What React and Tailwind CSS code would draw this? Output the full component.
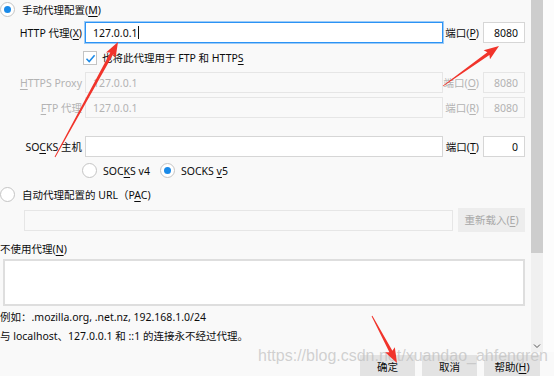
import React from "react";

const font = { fontFamily: '"Noto Sans", "Noto Sans CJK SC", sans-serif' };

const Radio = ({ on }) => (
  <span className="w-[15px] h-[15px] shrink-0 rounded-full border border-[#c4c4c4] bg-white flex items-center justify-center">
    {on ? <span className="w-[7px] h-[7px] rounded-full bg-[#1a8ae8]" /> : null}
  </span>
);

const U = ({ children }) => <span className="underline underline-offset-2">{children}</span>;

const Row = ({ label, value, portLabel, port, disabled, focused, top }) => (
  <div className={`flex items-center h-[21px] ${top}`}>
    <div className={`w-[82px] text-right whitespace-nowrap ${disabled ? "text-[#b3b3b3]" : ""}`}>{label}</div>
    <div
      className={`ml-[3px] w-[358px] h-full flex items-center pl-[7px] border ${
        focused
          ? "bg-white border-[#2b93f5] shadow-[0_0_0_1px_rgba(43,147,245,0.45)]"
          : disabled
          ? "bg-[#f9f9f9] border-[#e6e6e6] text-[#b3b3b3]"
          : "bg-white border-[#d6d6d6]"
      }`}
    >
      {value}
      {focused ? <span className="ml-px w-px h-[13px] bg-[#111]" /> : null}
    </div>
    <div className={`w-[36px] text-right whitespace-nowrap ${disabled ? "text-[#b3b3b3]" : ""}`}>{portLabel}</div>
    <div
      className={`ml-[4px] w-[42px] h-full flex items-center justify-end pr-[6px] border ${
        disabled ? "bg-[#f9f9f9] border-[#e6e6e6] text-[#b3b3b3]" : "bg-white border-[#d6d6d6]"
      }`}
    >
      {port}
    </div>
  </div>
);

function arrowPoints(x1, y1, x2, y2, L = 13, W = 5.5) {
  const dx = x2 - x1;
  const dy = y2 - y1;
  const len = Math.hypot(dx, dy);
  const ux = dx / len;
  const uy = dy / len;
  const nx = -uy;
  const ny = ux;
  const bx = x2 - ux * L;
  const by = y2 - uy * L;
  const bx2 = x2 - ux * (L + 2);
  const by2 = y2 - uy * (L + 2);
  const p = [
    [x1 + nx * 0.4, y1 + ny * 0.4],
    [bx + nx * 1.7, by + ny * 1.7],
    [bx2 + nx * W, by2 + ny * W],
    [x2, y2],
    [bx2 - nx * W, by2 - ny * W],
    [bx - nx * 1.7, by - ny * 1.7],
    [x1 - nx * 0.4, y1 - ny * 0.4],
  ];
  return p.map((q) => q.map((v) => v.toFixed(1)).join(",")).join(" ");
}

export default function App() {
  return (
    <div className="relative w-[554px] h-[376px] overflow-hidden bg-[#f9f9f9] text-[10.5px] leading-[14px] text-[#0c0c0d]" style={font}>
      <div className="flex h-[352px]">
        {/* main content */}
        <div className="w-[531px] flex flex-col">
          <div className="flex items-center h-[18px] pt-px">
            <Radio on />
            <span className="ml-[7px]">手动代理配置(<U>M</U>)</span>
          </div>

          <Row top="mt-[4px]" label={<>HTTP 代理(<U>X</U>)</>} value="127.0.0.1" portLabel={<>端口(<U>P</U>)</>} port="8080" focused />

          <div className="flex items-center h-[14px] mt-[8px] pl-[83px]">
            <span className="w-[14px] h-[14px] border border-[#c4c4c4] bg-white flex items-center justify-center">
              <svg width="11" height="11" viewBox="0 0 11 11">
                <path d="M1.5 5.8 L4.2 8.6 L9.6 2.2" fill="none" stroke="#1a8ae8" strokeWidth="1.5" />
              </svg>
            </span>
            <span className="ml-[5px]">也将此代理用于 FTP 和 HTTP<U>S</U></span>
          </div>

          <Row top="mt-[7px]" label={<><U>H</U>TTPS Proxy</>} value="127.0.0.1" portLabel={<>端口(<U>O</U>)</>} port="8080" disabled />
          <Row top="mt-[4px]" label={<><U>F</U>TP 代理</>} value="127.0.0.1" portLabel={<>端口(<U>R</U>)</>} port="8080" disabled />
          <Row top="mt-[18px]" label={<>SO<U>C</U>KS 主机</>} value="" portLabel={<>端口(<U>T</U>)</>} port="0" />

          <div className="flex items-center h-[15px] mt-[6px] pl-[82px]">
            <Radio />
            <span className="ml-[6px]">SOC<U>K</U>S v4</span>
            <span className="ml-[10px]"><Radio on /></span>
            <span className="ml-[6px]">SOCKS <U>v</U>5</span>
          </div>

          <div className="flex items-center h-[15px] mt-[9px]">
            <Radio />
            <span className="ml-[7px]">自动代理配置的 URL（P<U>A</U>C)</span>
          </div>

          <div className="flex items-center h-[24px] mt-[6px] pl-[24px]">
            <div className="w-[429px] h-[21px] border border-[#e6e6e6] bg-[#f9f9f9]" />
            <div className="ml-[5px] w-[67px] h-[24px] bg-[#ededed] text-[#a8a8a8] flex items-center justify-center">
              重新载入(<U>E</U>)
            </div>
          </div>

          <div className="mt-[10px]">不使用代理(<U>N</U>)</div>
          <div className="mt-[3px] ml-[3px] w-[522px] h-[47px] bg-white border-2 border-[#dedede]" />
          <div className="mt-[4px]">例如：.mozilla.org, .net.nz, 192.168.1.0/24</div>
          <div className="mt-[5px]">与 localhost、127.0.0.1 和 ::1 的连接永不经过代理。</div>
        </div>

        {/* scrollbar */}
        <div className="w-[12px] bg-[#f0f0f0] flex flex-col">
          <div className="h-[253px] bg-[#cdcdcd]" />
          <div className="flex-1 flex items-end justify-center pb-[3px]">
            <svg width="8" height="6" viewBox="0 0 8 6">
              <path d="M1 1.5 L4 4.5 L7 1.5" fill="none" stroke="#555" strokeWidth="1" />
            </svg>
          </div>
        </div>
        <div className="flex-1 bg-[#fcfcfc]" />
      </div>

      {/* dialog buttons */}
      <div className="flex mt-[3px] pl-[360px] gap-[7px]">
        <div className="w-[55px] h-[24px] bg-[#e3e3e3] flex items-center justify-center">确定</div>
        <div className="w-[55px] h-[24px] bg-[#e3e3e3] flex items-center justify-center">取消</div>
        <div className="w-[56px] h-[24px] bg-[#e3e3e3] flex items-center justify-center">帮助(<U>H</U>)</div>
      </div>

      {/* watermark */}
      <div
        className="absolute left-[258px] top-[348px] text-[16px] leading-[16px] text-[rgba(190,190,190,0.7)] whitespace-nowrap"
        style={{ fontFamily: '"Liberation Sans", Arial, sans-serif' }}
      >
        https://blog.csdn.net/xuandao_ahfengren
      </div>

      {/* red annotation arrows */}
      <svg className="absolute inset-0 pointer-events-none" width="554" height="376">
        <polygon points={arrowPoints(55, 157, 118, 42)} fill="#f1342b" />
        <polygon points={arrowPoints(443, 86, 499, 46)} fill="#f1342b" />
        <polygon points={arrowPoints(372, 316, 397, 363)} fill="#f1342b" />
      </svg>
    </div>
  );
}
